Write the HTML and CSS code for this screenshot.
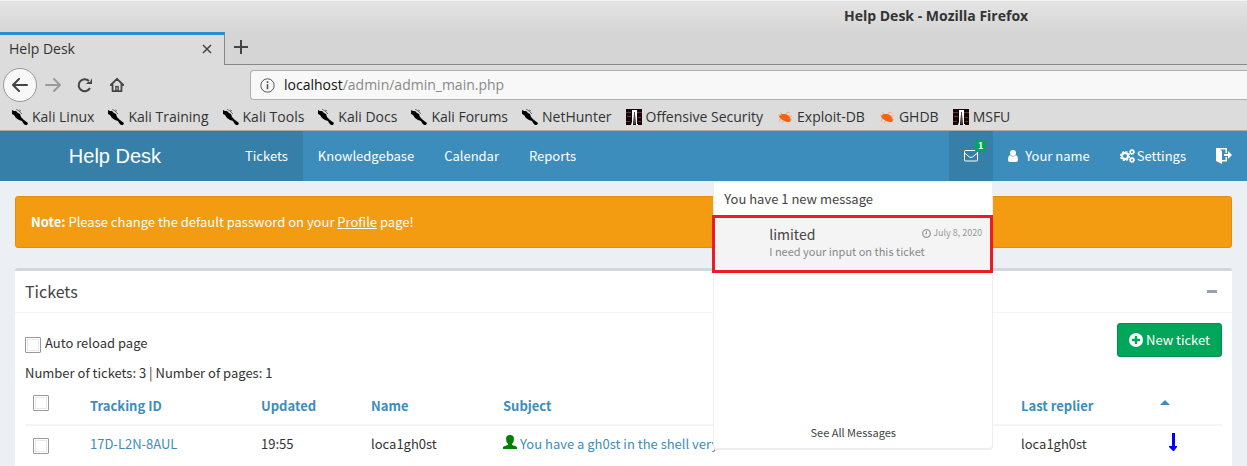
FILE: index.html
```html
<!DOCTYPE html>
<html lang="en">
<head>
<meta charset="utf-8">
<title>Help Desk</title>
<link rel="stylesheet" href="styles.css">
</head>
<body>
<svg class="defs" aria-hidden="true">
  <symbol id="kali" viewBox="0 0 16 16"><path d="M0 1l2 1h2l2 2 2 1 1 3 3 3 4 3-1 2-2 0-2-2-1-2-3-1-3-2-2-3-2-1z"/><path d="M4 0l3 2 3 3M7 1l2 1" stroke="#000" stroke-width=".5" fill="none"/></symbol>
  <symbol id="offsec" viewBox="0 0 16 16"><path fill="#160606" d="M0 0h16v16H0z"/><path fill="#5c3a3a" d="M0 3h5v1H0zM11 3h5v1h-5zM1 7h4v1H1zM12 8h3v1h-3zM0 12h4v1H0zM12 12h3v1h-3z"/><path fill="#fff" d="M6 1h5v14h1v1h-2L9 5H8L7 16H5l1-3z"/><path fill="#544" d="M8 3h1v12H8z"/></symbol>
  <symbol id="bug" viewBox="0 0 16 16"><path fill="#f26411" d="M3 6l2-1 3 0 3 1 2 2 1 3-1 2-3 0-3-1-3-2-2-2z"/><path stroke="#f4a070" stroke-width=".7" fill="none" d="M5 5L3 3M9 5l1-2 3 1M11 7h4M12 9l3 2M4 10l-2 1 1 2M7 12l-2 1 1 1M1 6h3"/></symbol>
</svg>

<div class="browser">
  <div class="titlebar"><span>Help Desk - Mozilla Firefox</span></div>
  <div class="tabs">
    <div class="tab"><span>Help Desk</span>
      <button class="plain" aria-label="Close tab"><svg width="10" height="10" viewBox="0 0 10 10"><path d="M1 1l8 8M9 1l-8 8" stroke="#444" stroke-width="1.5"/></svg></button>
    </div>
    <button class="plain newtab" aria-label="New tab"><svg width="14" height="14" viewBox="0 0 14 14"><path d="M7 0v14M0 7h14" stroke="#444" stroke-width="2"/></svg></button>
  </div>
  <div class="toolbar">
    <div class="navbuttons">
      <button class="back" aria-label="Back"><svg width="16" height="14" viewBox="0 0 16 14" fill="none" stroke="#444" stroke-width="2" stroke-linecap="round" stroke-linejoin="round"><path d="M15 7H1M7 1L1 7l6 6"/></svg></button>
      <button class="plain" aria-label="Forward"><svg width="16" height="14" viewBox="0 0 16 14" fill="none" stroke="#9a9a9a" stroke-width="2" stroke-linecap="round" stroke-linejoin="round"><path d="M1 7h14M9 1l6 6-6 6"/></svg></button>
      <button class="plain" aria-label="Reload"><svg width="16" height="16" viewBox="0 0 16 16" fill="none" stroke="#444" stroke-width="2"><path d="M13 11a6 6 0 1 1-1-7"/><path d="M15 1v6H9l2-2 2 0 1-2z" fill="#444" stroke="none"/></svg></button>
      <button class="plain" aria-label="Home"><svg width="16" height="16" viewBox="0 0 18 16" fill="none" stroke="#444" stroke-width="2" stroke-linejoin="round" stroke-linecap="round"><path d="M2 8l7-7 7 7M4 7v8h10V7"/><path d="M7 9h4v6H7z" fill="#444" stroke="none"/><path d="M9 11v2" stroke="#ddd" stroke-width="1"/></svg></button>
    </div>
    <div class="url">
      <svg width="15" height="15" viewBox="0 0 15 15"><circle cx="7.5" cy="7.5" r="6.7" fill="none" stroke="#555"/><path d="M7.5 6.2v5M7.5 3.2v1.8" stroke="#555" stroke-width="1.6"/></svg>
      <span>localhost<i>/admin/admin_main.php</i></span>
    </div>
  </div>
  <nav class="bookmarks" aria-label="Bookmarks">
    <a href="#"><svg><use href="#kali"/></svg>Kali Linux</a>
    <a href="#"><svg><use href="#kali"/></svg>Kali Training</a>
    <a href="#"><svg><use href="#kali"/></svg>Kali Tools</a>
    <a href="#"><svg><use href="#kali"/></svg>Kali Docs</a>
    <a href="#"><svg><use href="#kali"/></svg>Kali Forums</a>
    <a href="#"><svg><use href="#kali"/></svg>NetHunter</a>
    <a href="#"><svg><use href="#offsec"/></svg>Offensive Security</a>
    <a href="#"><svg><use href="#bug"/></svg>Exploit-DB</a>
    <a href="#"><svg><use href="#bug"/></svg>GHDB</a>
    <a href="#"><svg><use href="#offsec"/></svg>MSFU</a>
  </nav>
</div>

<header class="header">
  <a class="logo" href="#">Help Desk</a>
  <nav class="menu">
    <a class="active" href="#">Tickets</a>
    <a href="#">Knowledgebase</a>
    <a href="#">Calendar</a>
    <a href="#">Reports</a>
  </nav>
  <div class="menu user">
    <a class="active mail" href="#" aria-label="Messages"><svg width="14" height="12" viewBox="0 0 14 12" fill="none" stroke="#fff"><rect x=".5" y=".5" width="13" height="10.5" rx="1"/><path d="M.5 3l5 4q1.500 1 3 0l5-4"/></svg><b>1</b></a>
    <a href="#"><svg class="person" width="10" height="12" viewBox="0 0 10 12" fill="#fff"><circle cx="5" cy="3" r="3"/><path d="M2 5q3 3 6 0 2 1 2 5 0 2-2 2H2q-2 0-2-2 0-4 2-5z"/></svg>Your name</a>
    <a href="#"><svg class="gears" width="15" height="14" viewBox="0 0 15 14" fill="none" stroke="#fff"><circle cx="5" cy="7" r="3" stroke-width="2"/><circle cx="5" cy="7" r="4.400" stroke-width="1.400" stroke-dasharray="2 1.450"/><circle cx="12" cy="3" r="1.700" stroke-width="1.400"/><circle cx="12" cy="3" r="2.600" stroke-dasharray="1.200 .85"/><circle cx="12" cy="11" r="1.700" stroke-width="1.400"/><circle cx="12" cy="11" r="2.600" stroke-dasharray="1.200 .85"/></svg>Settings</a>
    <a href="#" aria-label="Log out"><svg width="16" height="16" viewBox="0 0 16 16" fill="#fff"><path d="M0 0h11v5H9.500V1.500H4L6 3v13L0 13zM6 12h3.500V9H11v4.500H6zM8 6h4V3l4 4-4 4V8H8z"/></svg></a>
    <section class="messages">
      <h2>You have 1 new message</h2>
      <a class="message" href="#">
        <span class="from">limited</span>
        <span class="date"><svg width="9" height="9" viewBox="0 0 9 9" fill="none" stroke="#999"><circle cx="4.500" cy="4.500" r="3.800" stroke-width="1.300"/><path d="M4.500 2v3H3"/></svg>July 8, 2020</span>
        <span class="text">I need your input on this ticket</span>
      </a>
      <a class="all" href="#">See All Messages</a>
    </section>
  </div>
</header>

<main>
  <div class="alert"><b>Note:</b> Please change the default password on your <a href="#">Profile</a> page!</div>
  <section class="box">
    <div class="boxhead"><h1>Tickets</h1><button class="plain" aria-label="Collapse"><svg width="10" height="3"><path d="M0 0h10v3H0z" fill="#97a0b3"/></svg></button></div>
    <div class="boxbody">
      <div class="tools">
        <div class="info">
          <label><input type="checkbox">Auto reload page</label>
          <p>Number of tickets: 3 | Number of pages: 1</p>
        </div>
        <button class="new"><svg width="14" height="14" viewBox="0 0 14 14"><circle cx="7" cy="7" r="7" fill="#fff"/><path d="M7 3v8M3 7h8" stroke="#00a65a" stroke-width="2.400"/></svg>New ticket</button>
      </div>
      <table>
        <colgroup><col class="c-check"><col class="c-id"><col class="c-date"><col class="c-name"><col><col class="c-last"><col class="c-sort"></colgroup>
        <thead><tr>
          <th><input type="checkbox" aria-label="Select all"></th>
          <th><a href="#">Tracking ID</a></th><th><a href="#">Updated</a></th><th><a href="#">Name</a></th><th><a href="#">Subject</a></th><th><a href="#">Last replier</a></th>
          <th><a href="#" aria-label="Priority"><svg class="caret" width="10" height="5" viewBox="0 0 10 5"><path d="M5 0l5 5H0z" fill="#3c8dbc"/></svg></a></th>
        </tr></thead>
        <tbody><tr>
          <td><input class="low" type="checkbox" aria-label="Select ticket"></td>
          <td><a href="#">17D-L2N-8AUL</a></td><td>19:55</td><td>loca1gh0st</td>
          <td><svg class="owner" width="14" height="14" viewBox="0 0 14 14" fill="green"><path d="M7 0q4 0 4 4 0 3-2 5v1q4 1 5 2v2H0v-2q1-1 5-2V9Q3 7 3 4q0-4 4-4z"/></svg><a href="#">You have a gh0st in the shell very</a></td>
          <td>loca1gh0st</td>
          <td class="prio"><svg width="8" height="18" viewBox="0 0 8 18" fill="#00f"><path d="M3 0h3v13h2v1l-3 4h-1l-4-4v-1h3z"/></svg></td>
        </tr></tbody>
      </table>
    </div>
  </section>
</main>
</body>
</html>
```
FILE: styles.css
```css
* { box-sizing: border-box; }
body {
  margin: 0;
  min-height: 100vh;
  overflow: hidden;
  display: flex;
  flex-direction: column;
  background: #ecf0f5;
  color: #333;
  font: 13px/20px "Noto Sans CJK SC", sans-serif;
}
h1, h2, p { margin: 0; font-weight: 400; }
a { color: #3c8dbc; text-decoration: none; }
button { font: inherit; }
svg { display: block; flex: none; }
.defs { position: absolute; width: 0; height: 0; }
.plain { border: 0; padding: 0; background: none; }

.browser {
  background: #dcdcdc;
  border-bottom: 1px solid #aaa;
  color: #333;
  font: 14px/20px "Open Sans", sans-serif;
  white-space: nowrap;
}
.titlebar {
  height: 32px;
  padding: 5px 0 0 844px;
  border-top: 1px solid #f4f4f4;
  background: linear-gradient(#e4e4e4, #d6d6d6);
  font-weight: 700;
}
.tabs { display: flex; height: 33px; background: #d5d5d5; }
.tabs::after { content: ""; flex: 1; border-bottom: 1px solid #888; }
.tab {
  width: 225px;
  display: flex;
  align-items: center;
  justify-content: space-between;
  padding: 0 12px 2px 9px;
  border-top: 3px solid #2390d3;
  border-right: 1px solid #888;
  background: #dcdcdc;
}
.newtab { width: 30px; padding: 0 7px 2px 9px; border-bottom: 1px solid #888; }
.toolbar { display: flex; height: 40px; align-items: center; }
.navbuttons { width: 250px; display: flex; align-items: center; gap: 16px; padding-left: 3px; }
.navbuttons .plain:nth-child(2) { margin-left: -8px; }
.back {
  width: 34px;
  height: 34px;
  padding: 0 0 0 8px;
  border: 1px solid #999;
  border-radius: 50%;
  background: #f8f8f8;
}
.url {
  flex: 1;
  height: 30px;
  display: flex;
  align-items: center;
  gap: 9px;
  padding-left: 9px;
  border: 1px solid #b0b0b0;
  border-right: 0;
  border-radius: 4px 0 0 4px;
  background: #f8f8f8;
  color: #111;
}
.url i { color: #888; font-style: normal; }
.bookmarks { display: flex; height: 25px; padding: 0 0 2px 12px; gap: 14px; }
.bookmarks a { display: flex; align-items: center; gap: 4px; color: #333; }
.bookmarks svg { width: 16px; height: 16px; }

.header { display: flex; height: 50px; background: #3c8dbc; }
.header a { color: #fff; }
.logo {
  width: 230px;
  background: #367fa9;
  text-align: center;
  font: 20px/50px "Liberation Sans", Arial, sans-serif;
}
.menu { display: flex; }
.menu > a { display: flex; align-items: center; padding: 0 15px; }
.menu > .active { background: #367fa9; }
.user { position: relative; margin-left: auto; }
.mail { position: relative; }
.mail b {
  position: absolute;
  top: 9px;
  right: 7px;
  padding: 0 3px;
  border-radius: 2px;
  background: #00a65a;
  font-size: 9px;
  line-height: 12px;
}
.person { margin-right: 7px; }
.gears { margin-right: 2px; }
.messages {
  position: absolute;
  z-index: 2;
  top: 50px;
  left: -236px;
  width: 280px;
  border: 1px solid #eee;
  border-bottom-width: 2px;
  border-radius: 0 0 4px 4px;
  background: #fff;
}
.messages h2 { padding: 7px 10px 6px; color: #444; font-size: 13px; }
.message {
  display: grid;
  grid-template-columns: 1fr auto;
  align-content: start;
  height: 58px;
  margin: 0 -1px 0 -2px;
  padding: 7px 8px 7px 54px;
  border: 3px solid #ed1c24;
  background: #f4f4f4;
}
.from { color: #444; font-size: 14px; line-height: 18px; }
.date { display: flex; align-items: center; gap: 2px; color: #999; font-size: 9px; line-height: 16px; height: 16px; }
.text { grid-column: 1 / 3; color: #888; font-size: 11px; line-height: 16px; }
.header .all { display: block; padding: 149px 0 6px; color: #444; text-align: center; font-size: 11px; }

main { flex: 1; display: flex; flex-direction: column; gap: 20px; padding: 15px 15px 0; }
.alert { padding: 15px; border: 1px solid #e08e0b; border-radius: 3px; background: #f39c12; color: #fff; }
.alert a { color: #fff; text-decoration: underline; }
.box { flex: 1; border-top: 3px solid #d2d6de; border-radius: 3px 3px 0 0; background: #fff; }
.boxhead { display: flex; justify-content: space-between; align-items: center; padding: 10px 15px 11px 10px; border-bottom: 1px solid #f4f4f4; color: #444; }
.boxhead h1 { font-size: 16px; line-height: 20px; }
.boxbody { padding: 10px 10px 0; }
.tools { display: flex; justify-content: space-between; align-items: flex-start; padding-bottom: 5px; }
.info { display: grid; gap: 10px; padding-top: 10px; }
.info label { display: flex; gap: 4px; }
input {
  appearance: none;
  display: block;
  width: 16px;
  height: 16px;
  margin: 0;
  border: 1px solid #999;
  border-radius: 1px;
  background: #fff;
  box-shadow: inset 0 0 0 1px #fff, inset 0 0 0 2px #e8e8e8;
}
.info input { margin-top: 4px; }
.new {
  display: flex;
  align-items: center;
  gap: 3px;
  padding: 6px 11px;
  border: 1px solid #008d4c;
  border-radius: 3px;
  background: #00a65a;
  color: #fff;
}
table { width: 100%; table-layout: fixed; border-collapse: collapse; }
th, td { height: 36px; padding: 8px; text-align: left; white-space: nowrap; vertical-align: top; }
th { height: 37px; padding-bottom: 7px; border-bottom: 2px solid #f4f4f4; }
th input { margin-top: -1px; }
.low { margin-top: 4px; }
.c-check { width: 57px; }
.c-id { width: 171px; }
.c-date { width: 110px; }
.c-name { width: 132px; }
.c-last { width: 139px; }
.c-sort { width: 70px; }
.caret { margin-top: 4px; }
.owner { display: inline-block; margin-right: 3px; }
.prio { padding: 7px 17px; }
```
